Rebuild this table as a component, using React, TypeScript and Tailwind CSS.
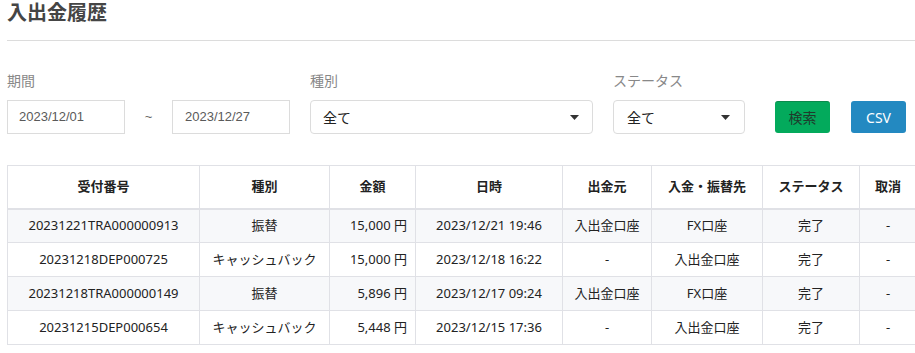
import React from "react";

const rows = [
  { id: "20231221TRA000000913", kind: "振替", amount: "15,000", date: "2023/12/21 19:46", from: "入出金口座", to: "FX口座", status: "完了" },
  { id: "20231218DEP000725", kind: "キャッシュバック", amount: "15,000", date: "2023/12/18 16:22", from: "-", to: "入出金口座", status: "完了" },
  { id: "20231218TRA000000149", kind: "振替", amount: "5,896", date: "2023/12/17 09:24", from: "入出金口座", to: "FX口座", status: "完了" },
  { id: "20231215DEP000654", kind: "キャッシュバック", amount: "5,448", date: "2023/12/15 17:36", from: "-", to: "入出金口座", status: "完了" },
];

const headers = ["受付番号", "種別", "金額", "日時", "出金元", "入金・振替先", "ステータス", "取消"];
const widths = [192, 130, 86, 147, 89, 111, 97, 57];

function Caret() {
  return (
    <svg width="9" height="5" viewBox="0 0 9 5" className="shrink-0">
      <path d="M0 0h9L4.5 5z" fill="#333" />
    </svg>
  );
}

export default function App() {
  return (
    <div className="w-[915px] h-[353px] overflow-hidden bg-white font-['Noto_Sans','Noto_Sans_CJK_JP',sans-serif]">
      <div className="pl-[7px]">
        <div className="h-[41px] pt-[1px] border-b border-[#dcdcdc]">
          <h1 className="text-[20px] leading-[24px] font-bold text-[#454545]">入出金履歴</h1>
        </div>

        <div className="flex items-end mt-[30px]">
          <div>
            <div className="text-[14px] leading-[20px] text-[#888] mb-[9px]">期間</div>
            <div className="flex items-center">
              <div className="w-[118px] h-[34px] border border-[#dcdcdc] pl-[11px] flex items-center text-[13px] text-[#5a5a5a] font-['Liberation_Sans',sans-serif]">
                2023/12/01
              </div>
              <div className="w-[47px] text-center text-[13px] text-[#666] font-['Liberation_Sans',sans-serif]">~</div>
              <div className="w-[118px] h-[34px] border border-[#dcdcdc] pl-[12px] flex items-center text-[13px] text-[#5a5a5a] font-['Liberation_Sans',sans-serif]">
                2023/12/27
              </div>
            </div>
          </div>

          <div className="ml-[20px]">
            <div className="text-[14px] leading-[20px] text-[#888] mb-[9px]">種別</div>
            <div className="w-[283px] h-[34px] border border-[#dcdcdc] rounded-[4px] pl-[12px] pr-[13px] flex items-center justify-between text-[14px] text-[#222]">
              <span>全て</span>
              <Caret />
            </div>
          </div>

          <div className="ml-[20px]">
            <div className="text-[14px] leading-[20px] text-[#888] mb-[9px]">ステータス</div>
            <div className="w-[132px] h-[34px] border border-[#dcdcdc] rounded-[4px] pl-[13px] pr-[14px] flex items-center justify-between text-[14px] text-[#222]">
              <span>全て</span>
              <Caret />
            </div>
          </div>

          <button className="ml-[30px] mb-[1px] w-[55px] h-[32px] rounded-[3px] bg-[#03aa5c] border-t border-[#0a8a4c] text-[14px] text-[#1f3a2c]">
            検索
          </button>
          <button className="ml-[21px] mb-[1px] w-[55px] h-[32px] rounded-[3px] bg-[#2389c1] text-[14px] text-white">
            CSV
          </button>
        </div>

        <table className="mt-[31px] border-collapse table-fixed w-[909px] text-[13px] text-[#222]">
          <colgroup>
            {widths.map((w, i) => (
              <col key={i} style={{ width: w }} />
            ))}
          </colgroup>
          <thead>
            <tr className="h-[43px]">
              {headers.map((h) => (
                <th key={h} className="border border-[#e0e1e6] border-b-2 font-bold text-center">
                  {h}
                </th>
              ))}
            </tr>
          </thead>
          <tbody>
            {rows.map((r, i) => (
              <tr key={r.id} className={`h-[34px] ${i % 2 === 0 ? "bg-[#f7f8fa]" : "bg-white"}`}>
                <td className="border border-[#e0e1e6] text-center">{r.id}</td>
                <td className="border border-[#e0e1e6] text-center">{r.kind}</td>
                <td className="border border-[#e0e1e6] text-right pr-[8px]">{r.amount} 円</td>
                <td className="border border-[#e0e1e6] text-center">{r.date}</td>
                <td className="border border-[#e0e1e6] text-center">{r.from}</td>
                <td className="border border-[#e0e1e6] text-center">{r.to}</td>
                <td className="border border-[#e0e1e6] text-center">{r.status}</td>
                <td className="border border-[#e0e1e6] text-center">-</td>
              </tr>
            ))}
          </tbody>
        </table>
      </div>
    </div>
  );
}
